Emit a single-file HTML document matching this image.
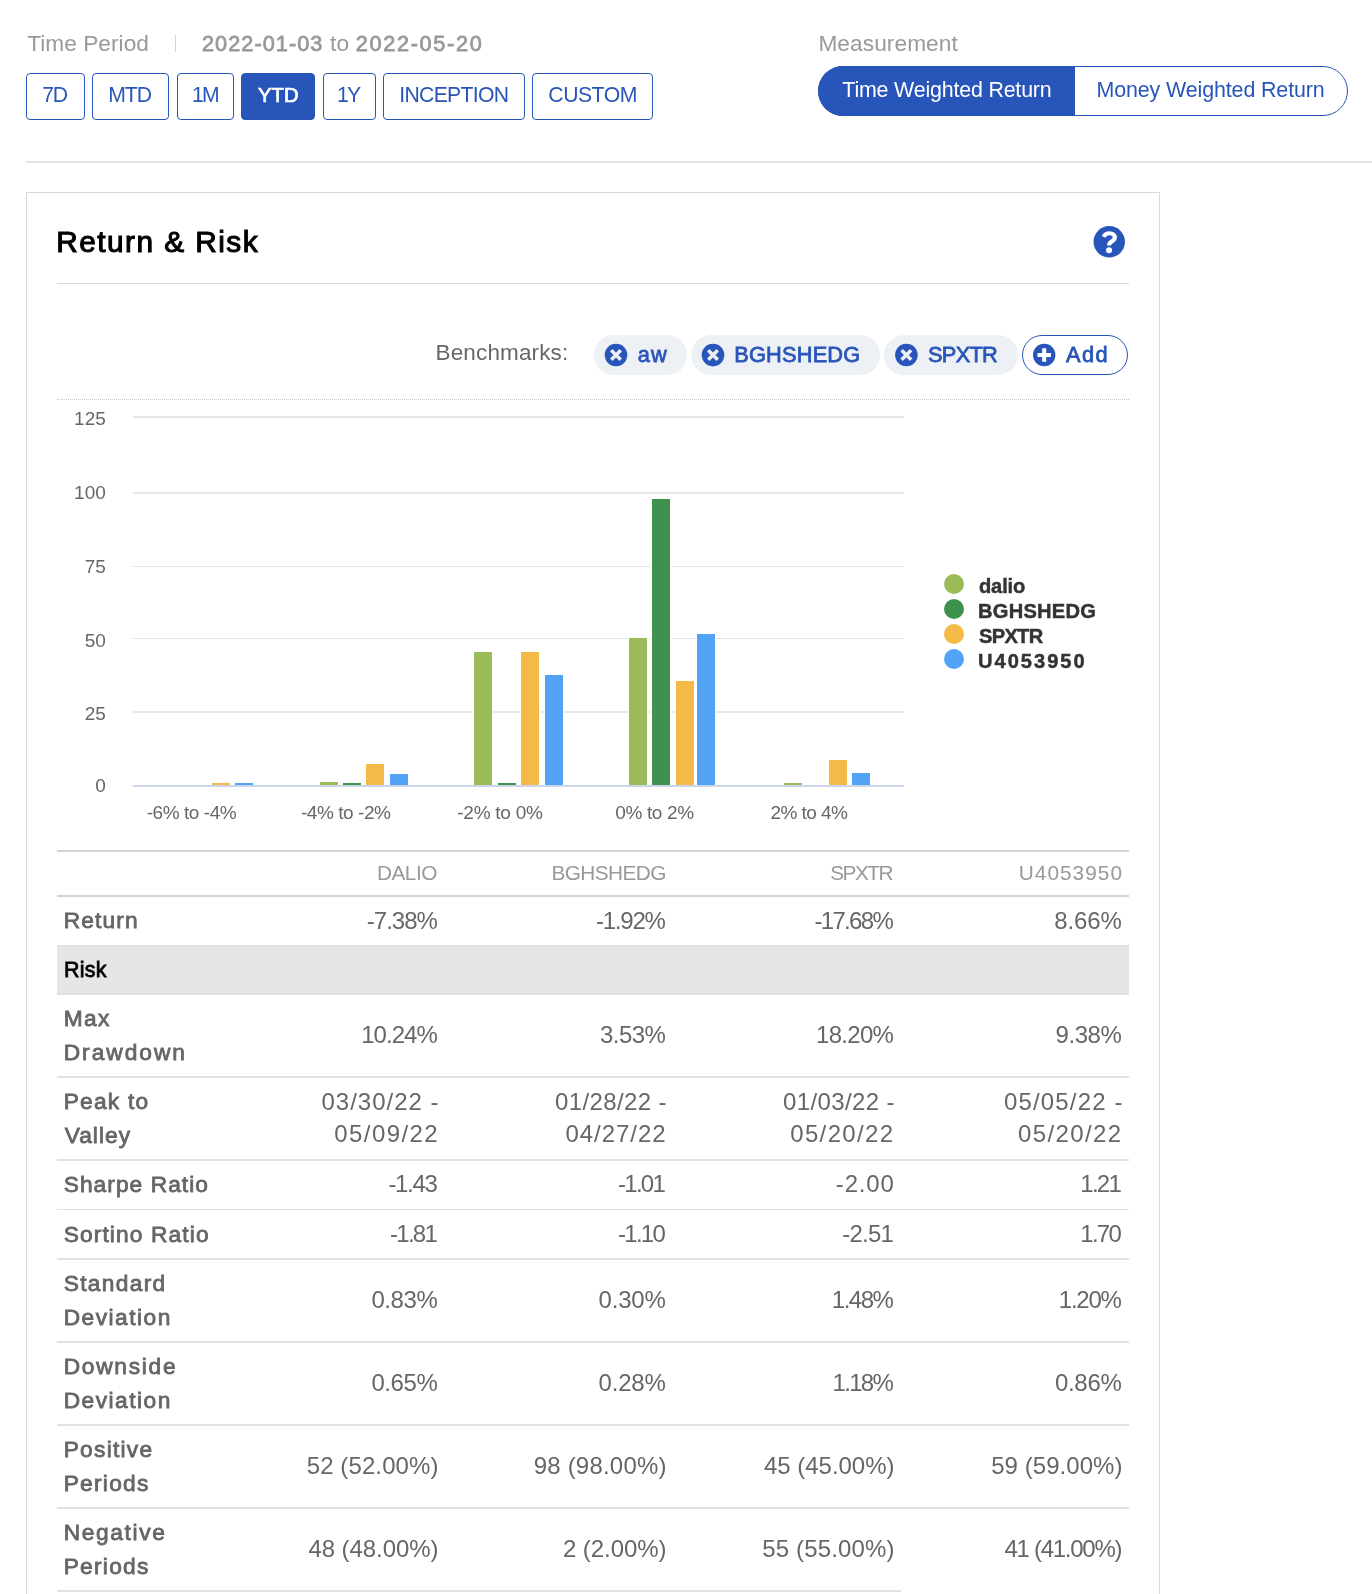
<!DOCTYPE html>
<html lang="en"><head><meta charset="utf-8"><title>Return &amp; Risk</title>
<style>
html,body{margin:0;padding:0;background:#fff;}
body{width:1372px;height:1594px;position:relative;overflow:hidden;font-family:"Liberation Sans",sans-serif;}
.t{position:absolute;white-space:nowrap;}
.tx{position:absolute;left:0;top:0;width:1372px;height:1594px;will-change:transform;}
.b{position:absolute;box-sizing:border-box;}
svg{position:absolute;overflow:visible;}
</style></head><body>
<div class="b" style="left:26px;top:73px;width:59px;height:47px;border:1px solid #2855b9;border-radius:4px;background:#fff;"></div>
<div class="b" style="left:92px;top:73px;width:77px;height:47px;border:1px solid #2855b9;border-radius:4px;background:#fff;"></div>
<div class="b" style="left:177px;top:73px;width:57px;height:47px;border:1px solid #2855b9;border-radius:4px;background:#fff;"></div>
<div class="b" style="left:241px;top:73px;width:74px;height:47px;border:1px solid #2855b9;border-radius:4px;background:#2855b9;"></div>
<div class="b" style="left:323px;top:73px;width:53px;height:47px;border:1px solid #2855b9;border-radius:4px;background:#fff;"></div>
<div class="b" style="left:383px;top:73px;width:142px;height:47px;border:1px solid #2855b9;border-radius:4px;background:#fff;"></div>
<div class="b" style="left:532px;top:73px;width:121px;height:47px;border:1px solid #2855b9;border-radius:4px;background:#fff;"></div>
<div class="b" style="left:818px;top:66px;width:530px;height:50px;border:1px solid #2855b9;border-radius:25px;background:#fff;"></div>
<div class="b" style="left:818px;top:66px;width:257px;height:50px;background:#2855b9;border-radius:25px 0 0 25px;"></div>
<div class="b" style="left:175px;top:35px;width:1px;height:17px;background:#d4d4d4;"></div>
<div class="b" style="left:26px;top:161px;width:1346px;height:2px;background:#e6e6e6;"></div>
<div class="b" style="left:26px;top:192px;width:1134px;height:1420px;border:1px solid #d9d9d9;background:#fff;"></div>
<div class="b" style="left:57px;top:283px;width:1072px;height:1px;background:#dcdcdc;"></div>
<div class="b" style="left:594px;top:335px;width:93px;height:40px;background:#edf1f6;border-radius:20px;"></div>
<div class="b" style="left:691px;top:335px;width:189px;height:40px;background:#edf1f6;border-radius:20px;"></div>
<div class="b" style="left:884px;top:335px;width:134px;height:40px;background:#edf1f6;border-radius:20px;"></div>
<div class="b" style="left:1022px;top:335px;width:106px;height:40px;border:1px solid #2855b9;border-radius:20px;background:#fff;"></div>
<div class="b" style="left:57px;top:399px;width:1072px;height:0px;border-top:1px dotted #c8c8c8;"></div>
<div class="b" style="left:133px;top:416px;width:771px;height:2px;background:#e6e6e6;"></div>
<div class="b" style="left:133px;top:492px;width:771px;height:2px;background:#e6e6e6;"></div>
<div class="b" style="left:133px;top:566px;width:771px;height:1px;background:#e3e3e3;"></div>
<div class="b" style="left:133px;top:638px;width:771px;height:1px;background:#e3e3e3;"></div>
<div class="b" style="left:133px;top:711px;width:771px;height:2px;background:#e6e6e6;"></div>
<div class="b" style="left:212px;top:783px;width:18px;height:2.5px;background:#f4b946;box-shadow:0 0 0 1.5px #fff;"></div>
<div class="b" style="left:235px;top:783px;width:18px;height:2.5px;background:#52a3f6;box-shadow:0 0 0 1.5px #fff;"></div>
<div class="b" style="left:320px;top:781.5px;width:18px;height:4.0px;background:#9bbb59;box-shadow:0 0 0 1.5px #fff;"></div>
<div class="b" style="left:343px;top:783.3px;width:18px;height:2.2000000000000455px;background:#3f924e;box-shadow:0 0 0 1.5px #fff;"></div>
<div class="b" style="left:366px;top:763.7px;width:18px;height:21.799999999999955px;background:#f4b946;box-shadow:0 0 0 1.5px #fff;"></div>
<div class="b" style="left:390px;top:774.3px;width:18px;height:11.200000000000045px;background:#52a3f6;box-shadow:0 0 0 1.5px #fff;"></div>
<div class="b" style="left:474px;top:652px;width:18px;height:133.5px;background:#9bbb59;box-shadow:0 0 0 1.5px #fff;"></div>
<div class="b" style="left:498px;top:783px;width:18px;height:2.5px;background:#3f924e;box-shadow:0 0 0 1.5px #fff;"></div>
<div class="b" style="left:521px;top:652px;width:18px;height:133.5px;background:#f4b946;box-shadow:0 0 0 1.5px #fff;"></div>
<div class="b" style="left:544.5px;top:675.3px;width:18px;height:110.20000000000005px;background:#52a3f6;box-shadow:0 0 0 1.5px #fff;"></div>
<div class="b" style="left:629px;top:637.6px;width:18px;height:147.89999999999998px;background:#9bbb59;box-shadow:0 0 0 1.5px #fff;"></div>
<div class="b" style="left:652px;top:499px;width:18px;height:286.5px;background:#3f924e;box-shadow:0 0 0 1.5px #fff;"></div>
<div class="b" style="left:676px;top:681px;width:18px;height:104.5px;background:#f4b946;box-shadow:0 0 0 1.5px #fff;"></div>
<div class="b" style="left:697px;top:633.9px;width:18px;height:151.60000000000002px;background:#52a3f6;box-shadow:0 0 0 1.5px #fff;"></div>
<div class="b" style="left:784px;top:783.3px;width:18px;height:2.2000000000000455px;background:#9bbb59;box-shadow:0 0 0 1.5px #fff;"></div>
<div class="b" style="left:829px;top:760px;width:18px;height:25.5px;background:#f4b946;box-shadow:0 0 0 1.5px #fff;"></div>
<div class="b" style="left:852px;top:772.7px;width:18px;height:12.799999999999955px;background:#52a3f6;box-shadow:0 0 0 1.5px #fff;"></div>
<div class="b" style="left:133px;top:785px;width:771px;height:2px;background:#ccd6eb;"></div>
<div class="b" style="left:944.3px;top:573.6px;width:20px;height:20px;background:#9bbb59;border-radius:50%;"></div>
<div class="b" style="left:944.3px;top:598.8px;width:20px;height:20px;background:#3f924e;border-radius:50%;"></div>
<div class="b" style="left:944.3px;top:624.1px;width:20px;height:20px;background:#f4b946;border-radius:50%;"></div>
<div class="b" style="left:944.3px;top:649.1px;width:20px;height:20px;background:#52a3f6;border-radius:50%;"></div>
<div class="b" style="left:57px;top:850px;width:1072px;height:2px;background:#d2d2d2;"></div>
<div class="b" style="left:57px;top:895px;width:1072px;height:2px;background:#d2d2d2;"></div>
<div class="b" style="left:57px;top:945px;width:1072px;height:50px;background:#e6e6e6;border-top:2px solid #dee2e6;border-bottom:2px solid #dee2e6;"></div>
<div class="b" style="left:57px;top:1076.3px;width:1072px;height:2px;background:#dee2e6;"></div>
<div class="b" style="left:57px;top:1159px;width:1072px;height:2px;background:#dee2e6;"></div>
<div class="b" style="left:57px;top:1208.7px;width:1072px;height:1.4px;background:#dee2e6;"></div>
<div class="b" style="left:57px;top:1258px;width:1072px;height:2px;background:#dee2e6;"></div>
<div class="b" style="left:57px;top:1341px;width:1072px;height:2px;background:#dee2e6;"></div>
<div class="b" style="left:57px;top:1424.3px;width:1072px;height:2px;background:#dee2e6;"></div>
<div class="b" style="left:57px;top:1507.3px;width:1072px;height:2px;background:#dee2e6;"></div>
<div class="b" style="left:57px;top:1590px;width:844px;height:2px;background:#dee2e6;"></div>
<svg style="left:0;top:0" width="1372" height="1594" viewBox="0 0 1372 1594"><g transform="translate(616 355)"><circle r="11.3" fill="#2855b9"/><path d="M-4.75 -4.75L4.75 4.75M4.75 -4.75L-4.75 4.75" stroke="#edf1f6" stroke-width="3.50" stroke-linecap="butt"/></g><g transform="translate(713 355.1)"><circle r="11.3" fill="#2855b9"/><path d="M-4.75 -4.75L4.75 4.75M4.75 -4.75L-4.75 4.75" stroke="#edf1f6" stroke-width="3.50" stroke-linecap="butt"/></g><g transform="translate(906.4 355)"><circle r="11.3" fill="#2855b9"/><path d="M-4.75 -4.75L4.75 4.75M4.75 -4.75L-4.75 4.75" stroke="#edf1f6" stroke-width="3.50" stroke-linecap="butt"/></g><g transform="translate(1044.2 355)"><circle r="11.2" fill="#2855b9"/><path d="M-6.72 0L6.72 0M0 -6.72L0 6.72" stroke="#fff" stroke-width="4.03" stroke-linecap="butt"/></g><g transform="translate(1109.25 241.8) scale(0.9812)"><circle r="16" fill="#2855b9"/><path d="M-5.7 -5C-4.6 -7.6 -2.6 -8.7 0 -8.7C3.4 -8.7 5.7 -7 5.7 -4.4C5.7 -0.4 -0.3 -0.8 -0.3 3.8" fill="none" stroke="#fff" stroke-width="4.3" stroke-linecap="butt" stroke-linejoin="round"/><circle cx="-0.2" cy="8.6" r="3.05" fill="#fff"/></g></svg>
<div class="tx">
<span class="t" style="left:27.20px;top:32.01px;font-size:22.7px;line-height:22.7px;color:#999;letter-spacing:0.026px;">Time Period</span>
<span class="t" style="left:202.00px;top:33.01px;font-size:21.69px;line-height:21.69px;color:#999;letter-spacing:1.047px;-webkit-text-stroke:0.77px #999;">2022-01-03</span>
<span class="t" style="left:330.00px;top:32.01px;font-size:22.7px;line-height:22.7px;color:#999;letter-spacing:0.297px;">to</span>
<span class="t" style="left:355.80px;top:33.01px;font-size:21.69px;line-height:21.69px;color:#999;letter-spacing:1.669px;-webkit-text-stroke:0.77px #999;">2022-05-20</span>
<span class="t" style="left:818.40px;top:32.02px;font-size:22.7px;line-height:22.7px;color:#999;letter-spacing:0.070px;">Measurement</span>
<span class="t" style="left:42.20px;top:84.01px;font-size:21.2px;line-height:21.2px;color:#2855b9;letter-spacing:-1.183px;">7D</span>
<span class="t" style="left:108.15px;top:84.01px;font-size:21.2px;line-height:21.2px;color:#2855b9;letter-spacing:-0.946px;">MTD</span>
<span class="t" style="left:191.96px;top:84.01px;font-size:21.2px;line-height:21.2px;color:#2855b9;letter-spacing:-1.700px;">1M</span>
<span class="t" style="left:257.90px;top:85.01px;font-size:20.26px;line-height:20.26px;color:#fff;letter-spacing:0.162px;-webkit-text-stroke:0.72px #fff;">YTD</span>
<span class="t" style="left:336.96px;top:84.01px;font-size:21.2px;line-height:21.2px;color:#2855b9;letter-spacing:-1.700px;">1Y</span>
<span class="t" style="left:399.25px;top:84.01px;font-size:21.2px;line-height:21.2px;color:#2855b9;letter-spacing:-0.695px;">INCEPTION</span>
<span class="t" style="left:548.35px;top:84.01px;font-size:21.2px;line-height:21.2px;color:#2855b9;letter-spacing:-0.495px;">CUSTOM</span>
<span class="t" style="left:842.30px;top:80.02px;font-size:21.4px;line-height:21.4px;color:#fff;letter-spacing:-0.180px;">Time Weighted Return</span>
<span class="t" style="left:1096.50px;top:80.02px;font-size:21.4px;line-height:21.4px;color:#2855b9;letter-spacing:-0.104px;">Money Weighted Return</span>
<span class="t" style="left:56.30px;top:227.00px;font-size:29.81px;line-height:29.81px;color:#000;letter-spacing:1.458px;-webkit-text-stroke:1.06px #000;">Return &amp; Risk</span>
<span class="t" style="left:435.60px;top:342.02px;font-size:22.5px;line-height:22.5px;color:#666;letter-spacing:0.125px;">Benchmarks:</span>
<span class="t" style="left:637.80px;top:344.00px;font-size:21.79px;line-height:21.79px;color:#2855b9;letter-spacing:1.186px;-webkit-text-stroke:0.78px #2855b9;">aw</span>
<span class="t" style="left:734.20px;top:344.00px;font-size:21.79px;line-height:21.79px;color:#2855b9;letter-spacing:0.198px;-webkit-text-stroke:0.78px #2855b9;">BGHSHEDG</span>
<span class="t" style="left:928.00px;top:344.00px;font-size:21.79px;line-height:21.79px;color:#2855b9;letter-spacing:-0.697px;-webkit-text-stroke:0.78px #2855b9;">SPXTR</span>
<span class="t" style="left:1066.00px;top:344.00px;font-size:21.79px;line-height:21.79px;color:#2855b9;letter-spacing:1.429px;-webkit-text-stroke:0.78px #2855b9;">Add</span>
<span class="t" style="left:74.07px;top:409.01px;font-size:19px;line-height:19px;color:#666;">125</span>
<span class="t" style="left:74.07px;top:483.01px;font-size:19px;line-height:19px;color:#666;">100</span>
<span class="t" style="left:84.63px;top:557.01px;font-size:19px;line-height:19px;color:#666;">75</span>
<span class="t" style="left:84.63px;top:631.01px;font-size:19px;line-height:19px;color:#666;">50</span>
<span class="t" style="left:84.63px;top:704.01px;font-size:19px;line-height:19px;color:#666;">25</span>
<span class="t" style="left:95.20px;top:776.01px;font-size:19px;line-height:19px;color:#666;">0</span>
<span class="t" style="left:146.70px;top:803.01px;font-size:19px;line-height:19px;color:#666;letter-spacing:-0.443px;">-6% to -4%</span>
<span class="t" style="left:301.00px;top:803.01px;font-size:19px;line-height:19px;color:#666;letter-spacing:-0.454px;">-4% to -2%</span>
<span class="t" style="left:457.30px;top:803.01px;font-size:19px;line-height:19px;color:#666;letter-spacing:-0.257px;">-2% to 0%</span>
<span class="t" style="left:615.30px;top:803.01px;font-size:19px;line-height:19px;color:#666;letter-spacing:-0.362px;">0% to 2%</span>
<span class="t" style="left:770.50px;top:803.01px;font-size:19px;line-height:19px;color:#666;letter-spacing:-0.562px;">2% to 4%</span>
<span class="t" style="left:979.00px;top:576.00px;font-size:20.1px;line-height:20.1px;color:#333;font-weight:700;letter-spacing:-0.154px;-webkit-text-stroke:0.46px #333;">dalio</span>
<span class="t" style="left:978.00px;top:601.00px;font-size:20.1px;line-height:20.1px;color:#333;font-weight:700;letter-spacing:0.246px;-webkit-text-stroke:0.46px #333;">BGHSHEDG</span>
<span class="t" style="left:979.00px;top:626.00px;font-size:20.1px;line-height:20.1px;color:#333;font-weight:700;letter-spacing:-0.695px;-webkit-text-stroke:0.46px #333;">SPXTR</span>
<span class="t" style="left:978.00px;top:651.00px;font-size:20.1px;line-height:20.1px;color:#333;font-weight:700;letter-spacing:1.991px;-webkit-text-stroke:0.46px #333;">U4053950</span>
<span class="t" style="left:377.00px;top:863.02px;font-size:20.8px;line-height:20.8px;color:#999;letter-spacing:-0.509px;">DALIO</span>
<span class="t" style="left:551.40px;top:863.02px;font-size:20.8px;line-height:20.8px;color:#999;letter-spacing:-0.564px;">BGHSHEDG</span>
<span class="t" style="left:830.20px;top:863.02px;font-size:20.8px;line-height:20.8px;color:#999;letter-spacing:-1.504px;">SPXTR</span>
<span class="t" style="left:1018.80px;top:863.02px;font-size:20.8px;line-height:20.8px;color:#999;letter-spacing:1.026px;">U4053950</span>
<span class="t" style="left:63.70px;top:909.00px;font-size:22.74px;line-height:22.74px;color:#666;letter-spacing:1.161px;-webkit-text-stroke:0.81px #666;">Return</span>
<span class="t" style="left:64.00px;top:960.00px;font-size:21.5px;line-height:21.5px;color:#000;letter-spacing:0.249px;-webkit-text-stroke:0.77px #000;">Risk</span>
<span class="t" style="left:63.70px;top:1007.00px;font-size:22.74px;line-height:22.74px;color:#666;letter-spacing:1.359px;-webkit-text-stroke:0.81px #666;">Max</span>
<span class="t" style="left:63.70px;top:1041.01px;font-size:22.74px;line-height:22.74px;color:#666;letter-spacing:1.978px;-webkit-text-stroke:0.81px #666;">Drawdown</span>
<span class="t" style="left:63.70px;top:1090.00px;font-size:22.74px;line-height:22.74px;color:#666;letter-spacing:1.241px;-webkit-text-stroke:0.81px #666;">Peak to</span>
<span class="t" style="left:64.70px;top:1124.01px;font-size:22.74px;line-height:22.74px;color:#666;letter-spacing:1.027px;-webkit-text-stroke:0.81px #666;">Valley</span>
<span class="t" style="left:63.70px;top:1173.01px;font-size:22.74px;line-height:22.74px;color:#666;letter-spacing:1.050px;-webkit-text-stroke:0.81px #666;">Sharpe Ratio</span>
<span class="t" style="left:63.70px;top:1223.01px;font-size:22.74px;line-height:22.74px;color:#666;letter-spacing:1.118px;-webkit-text-stroke:0.81px #666;">Sortino Ratio</span>
<span class="t" style="left:63.70px;top:1272.00px;font-size:22.74px;line-height:22.74px;color:#666;letter-spacing:1.325px;-webkit-text-stroke:0.81px #666;">Standard</span>
<span class="t" style="left:63.70px;top:1306.00px;font-size:22.74px;line-height:22.74px;color:#666;letter-spacing:1.483px;-webkit-text-stroke:0.81px #666;">Deviation</span>
<span class="t" style="left:63.70px;top:1355.00px;font-size:22.74px;line-height:22.74px;color:#666;letter-spacing:1.731px;-webkit-text-stroke:0.81px #666;">Downside</span>
<span class="t" style="left:63.70px;top:1389.00px;font-size:22.74px;line-height:22.74px;color:#666;letter-spacing:1.483px;-webkit-text-stroke:0.81px #666;">Deviation</span>
<span class="t" style="left:63.70px;top:1438.00px;font-size:22.74px;line-height:22.74px;color:#666;letter-spacing:1.263px;-webkit-text-stroke:0.81px #666;">Positive</span>
<span class="t" style="left:63.70px;top:1472.00px;font-size:22.74px;line-height:22.74px;color:#666;letter-spacing:1.264px;-webkit-text-stroke:0.81px #666;">Periods</span>
<span class="t" style="left:63.70px;top:1521.00px;font-size:22.74px;line-height:22.74px;color:#666;letter-spacing:1.645px;-webkit-text-stroke:0.81px #666;">Negative</span>
<span class="t" style="left:63.70px;top:1555.00px;font-size:22.74px;line-height:22.74px;color:#666;letter-spacing:1.264px;-webkit-text-stroke:0.81px #666;">Periods</span>
<span class="t" style="left:366.80px;top:909.02px;font-size:24px;line-height:24px;color:#666;letter-spacing:-1.001px;">-7.38%</span>
<span class="t" style="left:596.00px;top:909.02px;font-size:24px;line-height:24px;color:#666;letter-spacing:-1.241px;">-1.92%</span>
<span class="t" style="left:814.40px;top:909.02px;font-size:24px;line-height:24px;color:#666;letter-spacing:-1.658px;">-17.68%</span>
<span class="t" style="left:1054.20px;top:909.02px;font-size:24px;line-height:24px;color:#666;letter-spacing:-0.103px;">8.66%</span>
<span class="t" style="left:361.20px;top:1023.02px;font-size:24px;line-height:24px;color:#666;letter-spacing:-0.952px;">10.24%</span>
<span class="t" style="left:600.00px;top:1023.02px;font-size:24px;line-height:24px;color:#666;letter-spacing:-0.553px;">3.53%</span>
<span class="t" style="left:816.10px;top:1023.02px;font-size:24px;line-height:24px;color:#666;letter-spacing:-0.732px;">18.20%</span>
<span class="t" style="left:1055.50px;top:1023.02px;font-size:24px;line-height:24px;color:#666;letter-spacing:-0.428px;">9.38%</span>
<span class="t" style="left:321.50px;top:1090.01px;font-size:24px;line-height:24px;color:#666;letter-spacing:0.990px;">03/30/22 -</span>
<span class="t" style="left:555.00px;top:1090.01px;font-size:24px;line-height:24px;color:#666;letter-spacing:0.379px;">01/28/22 -</span>
<span class="t" style="left:783.00px;top:1090.01px;font-size:24px;line-height:24px;color:#666;letter-spacing:0.379px;">01/03/22 -</span>
<span class="t" style="left:1004.00px;top:1090.01px;font-size:24px;line-height:24px;color:#666;letter-spacing:1.157px;">05/05/22 -</span>
<span class="t" style="left:334.30px;top:1122.01px;font-size:24px;line-height:24px;color:#666;letter-spacing:1.418px;">05/09/22</span>
<span class="t" style="left:565.50px;top:1122.01px;font-size:24px;line-height:24px;color:#666;letter-spacing:0.961px;">04/27/22</span>
<span class="t" style="left:790.20px;top:1122.01px;font-size:24px;line-height:24px;color:#666;letter-spacing:1.361px;">05/20/22</span>
<span class="t" style="left:1018.10px;top:1122.01px;font-size:24px;line-height:24px;color:#666;letter-spacing:1.375px;">05/20/22</span>
<span class="t" style="left:388.40px;top:1172.02px;font-size:24px;line-height:24px;color:#666;letter-spacing:-1.314px;">-1.43</span>
<span class="t" style="left:617.94px;top:1172.02px;font-size:24px;line-height:24px;color:#666;letter-spacing:-1.700px;">-1.01</span>
<span class="t" style="left:835.80px;top:1172.02px;font-size:24px;line-height:24px;color:#666;letter-spacing:0.836px;">-2.00</span>
<span class="t" style="left:1080.24px;top:1172.02px;font-size:24px;line-height:24px;color:#666;letter-spacing:-1.700px;">1.21</span>
<span class="t" style="left:389.94px;top:1222.02px;font-size:24px;line-height:24px;color:#666;letter-spacing:-1.700px;">-1.81</span>
<span class="t" style="left:617.94px;top:1222.02px;font-size:24px;line-height:24px;color:#666;letter-spacing:-1.700px;">-1.10</span>
<span class="t" style="left:842.30px;top:1222.02px;font-size:24px;line-height:24px;color:#666;letter-spacing:-0.789px;">-2.51</span>
<span class="t" style="left:1080.24px;top:1222.02px;font-size:24px;line-height:24px;color:#666;letter-spacing:-1.700px;">1.70</span>
<span class="t" style="left:371.40px;top:1288.01px;font-size:24px;line-height:24px;color:#666;letter-spacing:-0.403px;">0.83%</span>
<span class="t" style="left:598.60px;top:1288.01px;font-size:24px;line-height:24px;color:#666;letter-spacing:-0.203px;">0.30%</span>
<span class="t" style="left:831.80px;top:1288.01px;font-size:24px;line-height:24px;color:#666;letter-spacing:-1.503px;">1.48%</span>
<span class="t" style="left:1058.80px;top:1288.01px;font-size:24px;line-height:24px;color:#666;letter-spacing:-1.253px;">1.20%</span>
<span class="t" style="left:371.40px;top:1371.01px;font-size:24px;line-height:24px;color:#666;letter-spacing:-0.403px;">0.65%</span>
<span class="t" style="left:598.60px;top:1371.01px;font-size:24px;line-height:24px;color:#666;letter-spacing:-0.203px;">0.28%</span>
<span class="t" style="left:832.59px;top:1371.01px;font-size:24px;line-height:24px;color:#666;letter-spacing:-1.700px;">1.18%</span>
<span class="t" style="left:1054.90px;top:1371.01px;font-size:24px;line-height:24px;color:#666;letter-spacing:-0.278px;">0.86%</span>
<span class="t" style="left:306.70px;top:1454.02px;font-size:24px;line-height:24px;color:#666;letter-spacing:0.105px;">52 (52.00%)</span>
<span class="t" style="left:533.70px;top:1454.02px;font-size:24px;line-height:24px;color:#666;letter-spacing:0.205px;">98 (98.00%)</span>
<span class="t" style="left:764.00px;top:1454.02px;font-size:24px;line-height:24px;color:#666;letter-spacing:-0.025px;">45 (45.00%)</span>
<span class="t" style="left:991.20px;top:1454.02px;font-size:24px;line-height:24px;color:#666;letter-spacing:0.055px;">59 (59.00%)</span>
<span class="t" style="left:308.40px;top:1537.02px;font-size:24px;line-height:24px;color:#666;letter-spacing:-0.065px;">48 (48.00%)</span>
<span class="t" style="left:562.90px;top:1537.02px;font-size:24px;line-height:24px;color:#666;letter-spacing:-0.057px;">2 (2.00%)</span>
<span class="t" style="left:762.30px;top:1537.02px;font-size:24px;line-height:24px;color:#666;letter-spacing:0.145px;">55 (55.00%)</span>
<span class="t" style="left:1004.40px;top:1537.02px;font-size:24px;line-height:24px;color:#666;letter-spacing:-1.265px;">41 (41.00%)</span>
</div>
</body></html>
